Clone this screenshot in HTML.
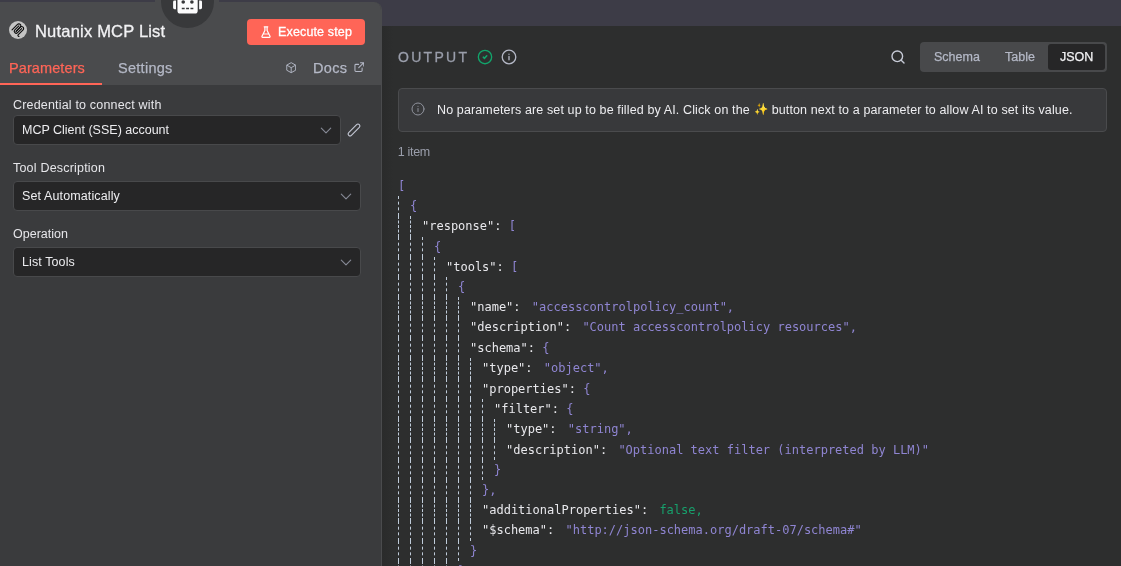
<!DOCTYPE html>
<html lang="en">
<head>
<meta charset="utf-8">
<title>Nutanix MCP List</title>
<style>
*{box-sizing:border-box;margin:0;padding:0}
html,body{width:1121px;height:566px;overflow:hidden;background:#3d3c47;font-family:"Liberation Sans",sans-serif;}
.abs{position:absolute}
#fg{position:absolute;left:0;top:0;width:1121px;height:566px;will-change:transform}
#out{position:absolute;left:382px;top:26px;width:739px;height:540px;background:#2d2e2e linear-gradient(90deg,#2a2b2b 0,#2d2e2e 11px) no-repeat;background-size:11px 100%}
#left{position:absolute;left:0;top:2px;width:382px;height:564px;background:#3a3b3d;border-top-right-radius:8px;overflow:hidden;border-right:1px solid #4a4b4d}
#lefthead{position:absolute;left:0;top:0;width:382px;height:83px;background:#4a4b4d}
#bot{position:absolute;left:160.6px;top:-25.2px;width:53.6px;height:53.6px;border-radius:50%;background:#38393b}
.t{position:absolute;white-space:nowrap;line-height:1}
#title{left:35px;top:23px;font-size:16.5px;color:#f2f2f4;letter-spacing:.2px;-webkit-text-stroke:.3px}
#exec{position:absolute;left:247px;top:19px;width:118px;height:26px;border-radius:4px;background:#ff6557}
#exec .t{left:31px;top:7px;font-size:12.5px;color:#fff;letter-spacing:.15px;-webkit-text-stroke:.3px}
.tab{font-size:14.5px;top:61px;-webkit-text-stroke:.25px}
#uline{position:absolute;left:0;top:81px;width:102px;height:2px;background:#ff6557}
.lbl{font-size:12.5px;color:#e6e6ea;left:13px}
.inp{position:absolute;left:13px;height:30px;background:#262627;border:1px solid #48494b;border-radius:4px}
.inp .t{left:8px;top:8px;font-size:12.5px;color:#ededf0}
.inp svg{position:absolute;right:8.5px;top:8px}
#seg{position:absolute;left:920px;top:42px;width:187px;height:30px;border-radius:4px;background:#48494b}
#seg .act{position:absolute;left:128px;top:2px;width:57px;height:26px;border-radius:3px;background:#262627}
#seg .t{font-size:12.5px;top:9px;color:#b4b8c6;-webkit-text-stroke:.25px}
#callout{position:absolute;left:398px;top:88px;width:709px;height:43.6px;border:1px solid #4a4b4d;border-radius:4px;background:#38393b}
#callout .t{top:15px;font-size:12.5px;color:#ededf0}
#json{position:absolute;left:398px;top:175.7px;font-family:"DejaVu Sans Mono","Liberation Mono",monospace;font-size:12px;color:#e8e8ec}
.r{display:flex;height:20.3px;line-height:20.3px;white-space:pre}
.r i{display:block;width:12px;height:100%;border-left:1px dashed #bfcbd9;flex:none}
.r i.n{border-left-color:transparent}
.p{color:#8f85d2}.s{color:#8f85d2}.b{color:#17a06c}
.v{margin-left:4px}
.u{position:relative;top:-1px}
</style>
</head>
<body>
<div id="out"></div>
<div id="left">
  <div id="lefthead"></div>
  <div id="uline"></div>
</div>
<div class="abs" style="left:155px;top:0;width:64px;height:3px;background:#4a4b4d"></div>
<div id="bot"></div>
<svg class="abs" style="left:173px;top:-10px" width="30" height="24" viewBox="-2.200 -10.200 663.700 531"><path fill="#fcfcfd" d="M32,224H64V416H32A31.96166,31.96166,0,0,1,0,384V256A31.96166,31.96166,0,0,1,32,224Zm512-48V448a64.06328,64.06328,0,0,1-64,64H160a64.06328,64.06328,0,0,1-64-64V176a79.974,79.974,0,0,1,80-80H288V32a32,32,0,0,1,64,0V96H464A79.974,79.974,0,0,1,544,176ZM264,256a40,40,0,1,0-40,40A39.997,39.997,0,0,0,264,256Zm-8,128H192v32h64Zm96,0H288v32h64ZM456,256a40,40,0,1,0-40,40A39.997,39.997,0,0,0,456,256Zm-8,128H384v32h64ZM640,256V384a31.96166,31.96166,0,0,1-32,32H576V224h32A31.96166,31.96166,0,0,1,640,256Z"/></svg>

<div id="fg">
<!-- left header -->
<div class="abs" style="left:9px;top:21px;width:18px;height:18px;border-radius:50%;background:#c4c4c4"></div>
<svg class="abs" style="left:10.150px;top:21.500px" width="15.800" height="15.800" viewBox="0 0 195 195" fill="none" stroke="#0c0c0c" stroke-width="13.500" stroke-linecap="round"><path d="M25 97.8528L92.8823 29.9706C102.255 20.598 117.451 20.598 126.823 29.9706C136.196 39.3431 136.196 54.5391 126.823 63.9117L75.5581 115.177"/><path d="M76.2653 114.47L126.823 63.9117C136.196 54.5391 151.392 54.5391 160.765 63.9117L161.118 64.2652C170.491 73.6378 170.491 88.8338 161.118 98.2063L99.7248 159.6C96.6006 162.724 96.6006 167.789 99.7248 170.913L112.331 183.52"/><path d="M109.853 46.9411L59.6482 97.1457C50.2757 106.518 50.2757 121.714 59.6482 131.087C69.0208 140.459 84.2168 140.459 93.5894 131.087L143.794 80.8822"/></svg>
<div class="t" id="title">Nutanix MCP List</div>
<div id="exec"><svg class="abs" style="left:14px;top:7px" width="10" height="12" viewBox="0 0 10 12" fill="none" stroke="#fff" stroke-width="1.2" stroke-linecap="round" stroke-linejoin="round"><path d="M3.2 .8h3.6M3.9 .8v3.6L1 10.2c-.3.6 0 1.1.7 1.1h6.6c.7 0 1-.5.7-1.1L6.100 4.400V.8M2.300 8h5.400"/></svg><div class="t">Execute step</div></div>
<div class="t tab" style="left:9px;color:#ff6557;letter-spacing:.1px">Parameters</div>
<div class="t tab" style="left:118px;color:#b4b8c6;letter-spacing:.28px">Settings</div>
<svg class="abs" style="left:286px;top:62.300px" width="10.400" height="11.350" viewBox="0 0 11 12" fill="none" stroke="#b4b8c6" stroke-width="1" stroke-linejoin="round"><path d="M5.500 .7 L10.200 3.300 V8.700 L5.500 11.300 L.8 8.700 V3.300 Z M.8 3.300 L5.500 6 L10.200 3.300 M5.500 6 V11.300"/></svg>
<div class="t tab" style="left:313px;color:#b4b8c6;letter-spacing:.3px">Docs</div>
<svg class="abs" style="left:353.700px;top:62.200px" width="10.500" height="10.500" viewBox="0 0 11 11" fill="none" stroke="#b4b8c6" stroke-width="1.1" stroke-linecap="round" stroke-linejoin="round"><path d="M8.500 6.200v2.800c0 .6-.4 1-1 1H2c-.6 0-1-.4-1-1V3.500c0-.6.4-1 1-1h2.800M6.800 .8h3.400v3.400M10 1L5 6"/></svg>

<!-- left body -->
<div class="t lbl" style="top:99px;letter-spacing:.18px">Credential to connect with</div>
<div class="inp" style="top:115px;width:328px"><div class="t">MCP Client (SSE) account</div><svg width="12" height="12" viewBox="0 0 12 12" fill="none" stroke="#858995" stroke-width="1.15" stroke-linecap="round" stroke-linejoin="round"><path d="M1.300 4.200l4.700 4.700l4.700-4.700"/></svg></div>
<svg class="abs" style="left:346px;top:121.600px" width="16" height="16" viewBox="0 0 16 16" fill="none" stroke="#c3c7d4" stroke-width="1.1"><rect x=".5" y="6.100" width="15" height="3.800" rx="1.900" transform="rotate(-45 8 8)"/></svg>
<div class="t lbl" style="top:162px;letter-spacing:.2px">Tool Description</div>
<div class="inp" style="top:181px;width:348px"><div class="t" style="letter-spacing:.12px">Set Automatically</div><svg width="12" height="12" viewBox="0 0 12 12" fill="none" stroke="#858995" stroke-width="1.15" stroke-linecap="round" stroke-linejoin="round"><path d="M1.300 4.200l4.700 4.700l4.700-4.700"/></svg></div>
<div class="t lbl" style="top:228px">Operation</div>
<div class="inp" style="top:247px;width:348px"><div class="t" style="letter-spacing:.1px">List Tools</div><svg width="12" height="12" viewBox="0 0 12 12" fill="none" stroke="#858995" stroke-width="1.15" stroke-linecap="round" stroke-linejoin="round"><path d="M1.300 4.200l4.700 4.700l4.700-4.700"/></svg></div>

<!-- output header -->
<div class="t" style="left:398px;top:50px;font-size:14px;letter-spacing:2.3px;-webkit-text-stroke:.3px;color:#9a9eab">OUTPUT</div>
<svg class="abs" style="left:477px;top:49px" width="16" height="16" viewBox="0 0 16 16" fill="none" stroke="#12a46b" stroke-width="1.35" stroke-linecap="round" stroke-linejoin="round"><circle cx="8" cy="8.050" r="6.650"/><path stroke-width="1.600" d="M6.300 8.200l1.200 1.150 2.250-2.600"/></svg>
<svg class="abs" style="left:501px;top:49px" width="16" height="16" viewBox="0 0 16 16" fill="none" stroke="#b4b8c6" stroke-width="1.3" stroke-linecap="round" stroke-linejoin="round"><circle cx="8" cy="8" r="6.800"/><path d="M8 7.500v3.300M8 5.200v.1"/></svg>
<svg class="abs" style="left:890px;top:49px" width="16" height="16" viewBox="0 0 16 16" fill="none" stroke="#c6cad6" stroke-width="1.4" stroke-linecap="round"><circle cx="7.300" cy="7.300" r="5.300"/><path d="M11.200 11.200L14 14"/></svg>
<div id="seg"><div class="act"></div><div class="t" style="left:14px">Schema</div><div class="t" style="left:85px">Table</div><div class="t" style="left:140px;color:#f2f2f4">JSON</div></div>
<div id="callout"><svg class="abs" style="left:12px;top:13px" width="14" height="14" viewBox="0 0 14 14" fill="none" stroke="#8f929c" stroke-width="1" stroke-linecap="round"><circle cx="7" cy="7" r="6"/><path d="M7 6.500v3M7 4.300v.1"/></svg><div class="t" style="left:38px;letter-spacing:.125px">No parameters are set up to be filled by AI. Click on the</div><div class="t" style="left:355.400px;color:#f5c04a;font-size:11.5px">✨</div><div class="t" style="left:372.700px;letter-spacing:.125px">button next to a parameter to allow AI to set its value.</div></div>
<div class="t" style="left:397.700px;top:146px;font-size:12.5px;letter-spacing:-.3px;color:#9a9eab">1 item</div>

<div id="json">
<div class="r"><span class="p">[</span></div>
<div class="r"><i></i><span class="p">{</span></div>
<div class="r"><i></i><i></i>"response": <span class="p">[</span></div>
<div class="r"><i></i><i></i><i></i><span class="p">{</span></div>
<div class="r"><i></i><i></i><i></i><i></i>"tools": <span class="p">[</span></div>
<div class="r"><i></i><i></i><i></i><i></i><i></i><span class="p">{</span></div>
<div class="r"><i></i><i></i><i></i><i></i><i></i><i></i>"name": <span class="s v">"accesscontrolpolicy_count",</span></div>
<div class="r"><i></i><i></i><i></i><i></i><i></i><i></i><span class="u">"description": <span class="s v">"Count accesscontrolpolicy resources",</span></span></div>
<div class="r"><i></i><i></i><i></i><i></i><i></i><i></i>"schema": <span class="p">{</span></div>
<div class="r"><i></i><i></i><i></i><i></i><i></i><i></i><i></i>"type": <span class="s v">"object",</span></div>
<div class="r"><i></i><i></i><i></i><i></i><i></i><i></i><i></i>"properties": <span class="p">{</span></div>
<div class="r"><i></i><i></i><i></i><i></i><i></i><i></i><i></i><i></i>"filter": <span class="p">{</span></div>
<div class="r"><i></i><i></i><i></i><i></i><i></i><i></i><i></i><i></i><i></i>"type": <span class="s v">"string",</span></div>
<div class="r"><i></i><i></i><i></i><i></i><i></i><i></i><i></i><i></i><i></i>"description": <span class="s v">"Optional text filter (interpreted by LLM)"</span></div>
<div class="r"><i></i><i></i><i></i><i></i><i></i><i></i><i></i><i></i><span class="p">}</span></div>
<div class="r"><i></i><i></i><i></i><i></i><i></i><i></i><i></i><span class="p">},</span></div>
<div class="r"><i></i><i></i><i></i><i></i><i></i><i></i><i></i>"additionalProperties": <span class="b v">false,</span></div>
<div class="r"><i></i><i></i><i></i><i></i><i></i><i></i><i></i><span class="u">"$schema": <span class="s v">"http://json-schema.org/draft-07/schema#"</span></span></div>
<div class="r"><i></i><i></i><i></i><i></i><i></i><i></i><span class="p">}</span></div>
<div class="r"><i></i><i></i><i></i><i></i><i></i><span class="p">},</span></div>
</div>
</div>
</body>
</html>
